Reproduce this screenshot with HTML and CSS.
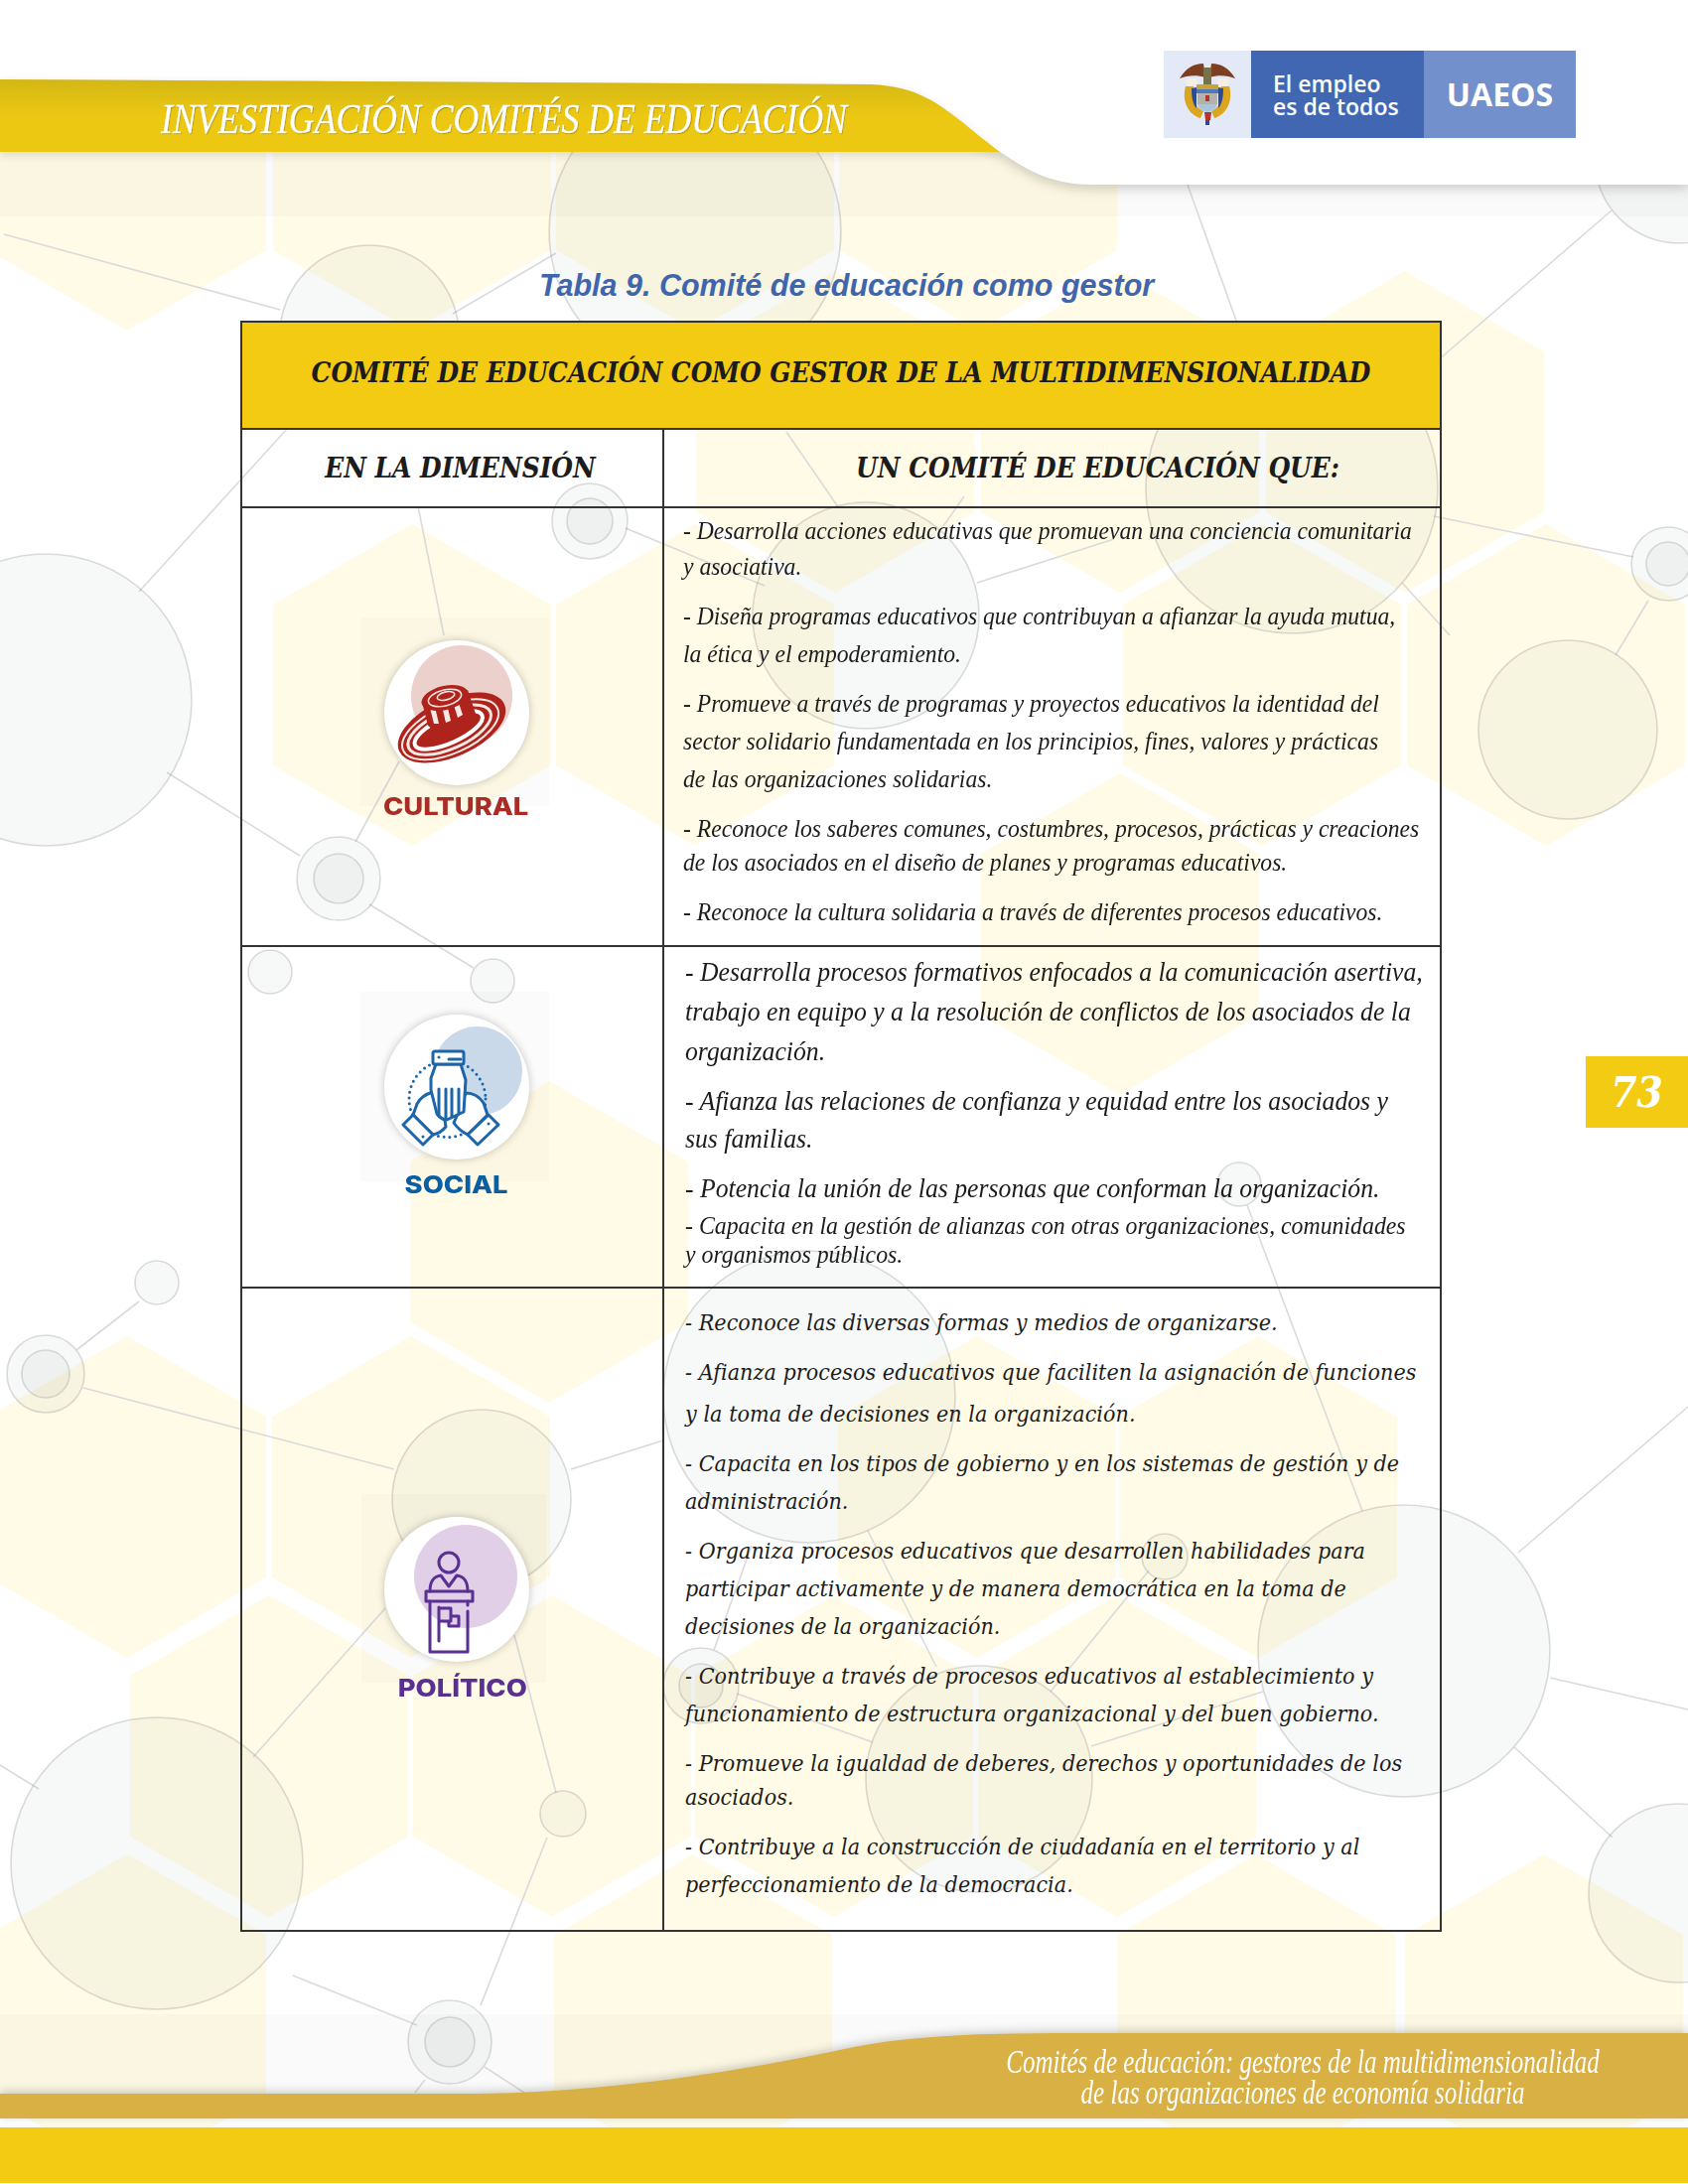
FILE: index.html
```html
<!DOCTYPE html>
<html lang="es">
<head>
    <meta charset="UTF-8">
    <title>Tabla 9. Comité de educación como gestor</title>
    <link rel="stylesheet" href="styles.css">
</head>
<body>
<div class="page">
    <!-- free canvas: honeycomb, network of circles, header and footer shapes -->
    <svg class="canvas" width="1700" height="2200" viewBox="0 0 1700 2200">
        <defs>
            <polygon id="hex" points="0,-162 140,-81 140,81 0,162 -140,81 -140,-81"/>
            <linearGradient id="bannerFill" x1="0" y1="80" x2="0" y2="153" gradientUnits="userSpaceOnUse">
                <stop offset="0" stop-color="#d3b714"/>
                <stop offset=".5" stop-color="#ecc813"/>
                <stop offset="1" stop-color="#ecc813"/>
            </linearGradient>
        </defs>
        <g class="hexes">
            <use href="#hex" x="128" y="171"/><use href="#hex" x="415" y="171"/><use href="#hex" x="700" y="171"/><use href="#hex" x="985" y="171"/>
            <use href="#hex" x="841" y="435"/><use href="#hex" x="1128" y="435"/><use href="#hex" x="1415" y="435"/>
            <use href="#hex" x="415" y="690"/><use href="#hex" x="700" y="690"/><use href="#hex" x="1271" y="690"/><use href="#hex" x="1557" y="690"/>
            <use href="#hex" x="1128" y="941"/>
            <use href="#hex" x="553" y="1251"/>
            <use href="#hex" x="128" y="1508"/><use href="#hex" x="414" y="1508"/><use href="#hex" x="984" y="1508"/><use href="#hex" x="1267" y="1508"/>
            <use href="#hex" x="271" y="1769"/><use href="#hex" x="556" y="1769"/><use href="#hex" x="840" y="1769"/><use href="#hex" x="1125" y="1769"/>
            <use href="#hex" x="128" y="2030"/><use href="#hex" x="698" y="2030"/><use href="#hex" x="1265" y="2030"/><use href="#hex" x="1555" y="2030"/>
        </g>
        <rect class="haze" x="0" y="150" width="1700" height="68"/>
        <rect class="haze" x="0" y="2029" width="1700" height="85"/>
        <g class="links">
            <line x1="4" y1="236" x2="282" y2="312"/><line x1="456" y1="316" x2="560" y2="255"/>
            <line x1="1196" y1="186" x2="1245" y2="323"/><line x1="1440" y1="370" x2="1623" y2="212"/>
            <line x1="1444" y1="520" x2="1645" y2="561"/><line x1="1627" y1="660" x2="1660" y2="605"/>
            <line x1="140" y1="596" x2="300" y2="420"/><line x1="421" y1="510" x2="447" y2="640"/>
            <line x1="792" y1="435" x2="845" y2="512"/><line x1="971" y1="500" x2="950" y2="530"/>
            <line x1="1122" y1="543" x2="984" y2="587"/><line x1="630" y1="532" x2="770" y2="590"/>
            <line x1="1412" y1="587" x2="1460" y2="640"/><line x1="168" y1="778" x2="302" y2="862"/>
            <line x1="372" y1="911" x2="477" y2="975"/><line x1="402" y1="767" x2="358" y2="848"/>
            <line x1="1256" y1="1214" x2="1372" y2="1522"/><line x1="77" y1="1360" x2="140" y2="1311"/>
            <line x1="84" y1="1398" x2="397" y2="1480"/><line x1="575" y1="1480" x2="668" y2="1451"/>
            <line x1="388" y1="1620" x2="255" y2="1770"/><line x1="518" y1="1647" x2="560" y2="1806"/>
            <line x1="551" y1="1851" x2="484" y2="2020"/><line x1="295" y1="1990" x2="420" y2="2040"/>
            <line x1="1529" y1="1564" x2="1700" y2="1417"/><line x1="1561" y1="1690" x2="1700" y2="1722"/>
            <line x1="1525" y1="1760" x2="1624" y2="1851"/><line x1="0" y1="1778" x2="39" y2="1802"/>
            <line x1="488" y1="2082" x2="528" y2="2108"/><line x1="418" y1="2108" x2="428" y2="2095"/>
            <line x1="874" y1="1542" x2="943" y2="1679"/><line x1="757" y1="1557" x2="719" y2="1662"/>
            <line x1="1157" y1="1582" x2="1058" y2="1704"/><line x1="742" y1="1706" x2="879" y2="1755"/>
            <line x1="1099" y1="1759" x2="1272" y2="1704"/>
        </g>
        <g class="nodes">
            <circle cx="700" cy="233" r="147"/><circle cx="372" cy="337" r="90"/><circle cx="1691" cy="160" r="85"/>
            <circle cx="1301" cy="491" r="147"/><circle cx="594" cy="525" r="38"/><circle cx="594" cy="525" r="23"/>
            <circle cx="872" cy="620" r="114"/><circle cx="1680" cy="568" r="37"/><circle cx="1680" cy="568" r="22"/>
            <circle cx="1579" cy="735" r="90"/><circle cx="46" cy="705" r="147"/><circle cx="341" cy="885" r="42"/><circle cx="341" cy="885" r="25"/>
            <circle cx="272" cy="979" r="22"/><circle cx="496" cy="988" r="22"/><circle cx="1248" cy="1193" r="22"/><circle cx="158" cy="1292" r="22"/>
            <circle cx="46" cy="1384" r="39"/><circle cx="46" cy="1384" r="24"/><circle cx="815" cy="1407" r="147"/><circle cx="485" cy="1510" r="90"/>
            <circle cx="1173" cy="1568" r="23"/><circle cx="706" cy="1698" r="38"/><circle cx="706" cy="1698" r="22"/>
            <circle cx="1414" cy="1663" r="147"/><circle cx="986" cy="1792" r="114"/><circle cx="567" cy="1827" r="23"/>
            <circle cx="158" cy="1877" r="147"/><circle cx="1690" cy="1907" r="90"/><circle cx="453" cy="2057" r="42"/><circle cx="453" cy="2057" r="25"/>
        </g>
        <g class="veil">
            <rect x="363" y="622" width="190" height="190"/>
            <rect x="363" y="999" width="190" height="191"/>
            <rect x="364" y="1505" width="186" height="190"/>
        </g>
        <path class="head-white" d="M0,0 H1700 V186 H1100 C1055,186 1030,168 1007,153 L877,85 L0,80 Z"/>
        <path class="head-yellow" fill="url(#bannerFill)" d="M0,80 L877,85 C925,87 945,105 968,122 C980,132 995,144 1007,153 H0 Z"/>
        <path class="foot-gold" d="M0,2109 H480 C600,2108 740,2088 850,2064 C920,2049 1000,2048 1085,2048 H1700 V2134 H0 Z"/>
    </svg>

    <div class="tab-number">73</div>

    <div class="content">
        <header class="top">
            <div class="banner-title">INVESTIGACIÓN COMITÉS DE EDUCACIÓN</div>
            <div class="logo">
                <div class="logo-shield">
                    <svg width="58" height="64" viewBox="0 0 58 64">
                        <path fill="#7d3f22" d="M1,16 C7,6 15,1 25,1 L27,15 C18,12 8,13 1,16 Z"/>
                        <path fill="#7d3f22" d="M57,16 C51,6 43,1 33,1 L31,15 C40,12 50,13 57,16 Z"/>
                        <rect fill="#77714a" x="25" y="5" width="8" height="17"/>
                        <path fill="#f6efe2" d="M6,17 L18,16 L20,25 L10,24 Z M52,17 L40,16 L38,25 L48,24 Z"/>
                        <path fill="#dca51f" d="M7,24 C3,38 9,52 22,56 L25,49 C17,46 13,36 15,24 Z"/>
                        <path fill="#dca51f" d="M51,24 C55,38 49,52 36,56 L33,49 C41,46 45,36 43,24 Z"/>
                        <path fill="#2d4b95" d="M13,26 L18,25 L18,46 C14,42 13,34 13,26 Z M45,26 L40,25 L40,46 C44,42 45,34 45,26 Z"/>
                        <rect fill="#c6a43a" x="18" y="22" width="22" height="5"/>
                        <rect fill="#4f79b8" x="18" y="27" width="22" height="4"/>
                        <rect fill="#b3b3ad" x="19" y="31" width="20" height="11"/>
                        <rect fill="#b4352c" x="27" y="33" width="4" height="6"/>
                        <path fill="#a8c6e0" d="M19,42 H39 C38,47 33,50 29,50 C25,50 20,47 19,42 Z"/>
                        <path fill="#b4352c" d="M26,50 H33 L32,58 H27 Z"/>
                        <rect fill="#2d4b95" x="27" y="58" width="4" height="5"/>
                    </svg>
                </div>
                <div class="logo-motto">El empleo<br>es de todos</div>
                <div class="logo-name">UAEOS</div>
            </div>
        </header>

        <h1 class="table-caption">Tabla 9. Comité de educación como gestor</h1>

        <table class="grid">
            <colgroup><col class="col-dim"><col class="col-text"></colgroup>
            <tr class="row-title">
                <th colspan="2">COMITÉ DE EDUCACIÓN COMO GESTOR DE LA MULTIDIMENSIONALIDAD</th>
            </tr>
            <tr class="row-head">
                <th class="head-dim">EN LA DIMENSIÓN</th>
                <th class="head-text">UN COMITÉ DE EDUCACIÓN QUE:</th>
            </tr>
            <tr class="row-cultural">
                <td class="dim">
                    <div class="dim-inner">
                        <div class="badge">
                            <svg width="146" height="146" viewBox="0 0 146 146">
                                <circle cx="78" cy="56" r="51" fill="#ecd0cb"/>
                                <g transform="rotate(-24 68 88)">
                                    <ellipse cx="68" cy="88" rx="58" ry="29" fill="#ae231b"/>
                                    <ellipse cx="66" cy="89" rx="52" ry="24" fill="none" stroke="#f8e8e4" stroke-width="2"/>
                                    <ellipse cx="65" cy="89" rx="45" ry="19" fill="none" stroke="#f8e8e4" stroke-width="3"/>
                                    <ellipse cx="64" cy="89" rx="37" ry="13" fill="none" stroke="#fff" stroke-width="4"/>
                                </g>
                                <path fill="#ae231b" d="M38,62 L44,86 C54,96 78,92 92,74 L84,50 Z"/>
                                <path fill="#f8e8e4" d="M46,68 l5,-1 l4,17 l-5,0 Z M58,66 l5,-2 l4,17 l-5,2 Z M69,62 l5,-2 l5,15 l-5,3 Z"/>
                                <ellipse cx="61" cy="58" rx="24" ry="12" fill="#ae231b" transform="rotate(-14 61 58)"/>
                                <ellipse cx="61" cy="58" rx="17" ry="8" fill="none" stroke="#f6e3df" stroke-width="1.6" transform="rotate(-14 61 58)"/>
                                <ellipse cx="62" cy="56" rx="9" ry="4" fill="none" stroke="#f6e3df" stroke-width="1.6" transform="rotate(-14 62 56)"/>
                            </svg>
                        </div>
                        <div class="dim-label cultural">CULTURAL</div>
                    </div>
                </td>
                <td class="text text-cultural">
                    <p class="lh-36">- Desarrolla acciones educativas que promuevan una conciencia comunitaria<br>y asociativa.</p>
                    <p>- Diseña programas educativos que contribuyan a afianzar la ayuda mutua,<br>la ética y el empoderamiento.</p>
                    <p>- Promueve a través de programas y proyectos educativos la identidad del<br>sector solidario fundamentada en los principios, fines, valores y prácticas<br>de las organizaciones solidarias.</p>
                    <p class="lh-34">- Reconoce los saberes comunes, costumbres, procesos, prácticas y creaciones<br>de los asociados en el diseño de planes y programas educativos.</p>
                    <p>- Reconoce la cultura solidaria a través de diferentes procesos educativos.</p>
                </td>
            </tr>
            <tr class="row-social">
                <td class="dim">
                    <div class="dim-inner">
                        <div class="badge">
                            <svg width="146" height="146" viewBox="0 0 146 146">
                                <circle cx="94" cy="57" r="45" fill="#c9d9ea"/>
                                <circle cx="63.5" cy="85" r="38.5" fill="none" stroke="#1b66ab" stroke-width="3" stroke-dasharray="0 5.8" stroke-linecap="round"/>
                                <g fill="#fff" stroke="#1b66ab" stroke-width="3" stroke-linejoin="round" stroke-linecap="round">
                                    <path d="M29,101 L33,90 C36,84 42,80 49,78 L60,100 L62,113 C58,118 54,120 49,121 Z"/>
                                    <path d="M104,101 L100,89 C96,83 90,79 82,79 L74,100 L70,109 C74,115 80,119 84,121 Z"/>
                                    <path d="M52,50 L47,64 L47,76 L53,100 C56,104 60,106 63,106 L80,98 L82,66 L77,50 Z"/>
                                    <rect x="49" y="37" width="31" height="13" rx="2"/>
                                    <path d="M19,111 L29,101 L49,121 L39,131 Z"/>
                                    <path d="M115,111 L105,101 L84,121 L94,131 Z"/>
                                    <path fill="none" d="M55,75 V102 M62,75 V104 M68,75 V103 M75,75 V100 M65,45 H77"/>
                                </g>
                                <g fill="#1b66ab"><circle cx="55" cy="43" r="1.5"/><circle cx="39" cy="123" r="1.5"/><circle cx="105" cy="110" r="1.5"/></g>
                            </svg>
                        </div>
                        <div class="dim-label social">SOCIAL</div>
                    </div>
                </td>
                <td class="text text-social">
                    <p class="lh-40">- Desarrolla procesos formativos enfocados a la comunicación asertiva,<br>trabajo en equipo y a la resolución de conflictos de los asociados de la<br>organización.</p>
                    <p>- Afianza las relaciones de confianza y equidad entre los asociados y<br>sus familias.</p>
                    <p>- Potencia la unión de las personas que conforman la organización.</p>
                    <p class="small">- Capacita en la gestión de alianzas con otras organizaciones, comunidades<br>y organismos públicos.</p>
                </td>
            </tr>
            <tr class="row-politico">
                <td class="dim">
                    <div class="dim-inner">
                        <div class="badge">
                            <svg width="146" height="146" viewBox="0 0 146 146">
                                <circle cx="82" cy="60" r="52" fill="#e0cfe6"/>
                                <g fill="none" stroke="#5a2f92" stroke-width="3" stroke-linejoin="round" stroke-linecap="round">
                                    <circle cx="65" cy="46" r="10"/>
                                    <path d="M46,75 C46,64 50,60 57,59 L65,70 L73,59 C80,60 84,64 84,75"/>
                                    <rect x="42" y="75" width="47" height="10"/>
                                    <path d="M46,85 V136 H84 V95 M84,85 V89"/>
                                    <path d="M55,91 V125 M55,92 H67 V105 H55 M67,100 H75 V110 H65 V105"/>
                                </g>
                            </svg>
                        </div>
                        <div class="dim-label politico">POLÍTICO</div>
                    </div>
                </td>
                <td class="text text-politico">
                    <p>- Reconoce las diversas formas y medios de organizarse.</p>
                    <p class="lh-42">- Afianza procesos educativos que faciliten la asignación de funciones<br>y la toma de decisiones en la organización.</p>
                    <p>- Capacita en los tipos de gobierno y en los sistemas de gestión y de<br>administración.</p>
                    <p>- Organiza procesos educativos que desarrollen habilidades para<br>participar activamente y de manera democrática en la toma de<br>decisiones de la organización.</p>
                    <p>- Contribuye a través de procesos educativos al establecimiento y<br>funcionamiento de estructura organizacional y del buen gobierno.</p>
                    <p class="lh-34">- Promueve la igualdad de deberes, derechos y oportunidades de los<br>asociados.</p>
                    <p>- Contribuye a la construcción de ciudadanía en el territorio y al<br>perfeccionamiento de la democracia.</p>
                </td>
            </tr>
        </table>

        <footer class="foot-title">Comités de educación: gestores de la multidimensionalidad<br>de las organizaciones de economía solidaria</footer>
        <div class="foot-bar"></div>
    </div>
</div>
</body>
</html>
```

FILE: styles.css
```css
* {
    box-sizing: border-box;
}

html, body {
    margin: 0;
    padding: 0;
    background: white;
}

.page {
    position: relative;
    width: 1700px;
    height: 2200px;
    overflow: hidden;
}

/* background canvas */
.canvas {
    position: absolute;
    left: 0;
    top: 0;
}

.hexes use {
    fill: #fffbe6;
}

.haze {
    fill: #000;
    opacity: .02;
}

.veil rect {
    fill: #000;
    opacity: .015;
}

.links line {
    stroke: #dadada;
    stroke-width: 1.6;
}

.nodes circle {
    fill: #6e7d7d;
    fill-opacity: .055;
    stroke: #9a9a9a;
    stroke-opacity: .35;
    stroke-width: 1.6;
}

.head-white {
    fill: white;
    filter: drop-shadow(0 4px 6px rgba(0, 0, 0, .18));
}

.head-yellow {
    filter: drop-shadow(0 3px 5px rgba(0, 0, 0, .12));
}

.foot-gold {
    fill: #d8b044;
    filter: drop-shadow(0 -2px 5px rgba(0, 0, 0, .2));
}

.tab-number {
    position: absolute;
    right: 0;
    top: 1064px;
    width: 103px;
    height: 72px;
    display: flex;
    align-items: center;
    justify-content: center;
    background-color: #f3cb13;
    color: white;
    font: italic bold 42px "DejaVu Serif Condensed", "DejaVu Serif", serif;
}

/* page flow */
.content {
    position: relative;
    display: flex;
    flex-direction: column;
    height: 2200px;
}

.top {
    display: flex;
    justify-content: space-between;
    align-items: flex-start;
    height: 255px;
    padding: 51px 113px 0 162px;
}

.banner-title {
    margin-top: 47px;
    font: italic 43px "Liberation Serif", serif;
    line-height: 44px;
    color: white;
    white-space: nowrap;
    -webkit-text-stroke: .3px white;
    text-shadow: 1px 1px 1px rgba(90, 70, 0, .45);
    transform: scaleX(.83);
    transform-origin: left center;
}

.logo {
    display: flex;
    height: 88px;
    color: white;
    font-family: "Open Sans", sans-serif;
}

.logo-shield {
    display: flex;
    align-items: center;
    justify-content: center;
    width: 88px;
    background-color: #e3e9f6;
}

.logo-motto {
    width: 174px;
    padding: 22px 0 0 22px;
    background-color: #4267b2;
    font-size: 23px;
    font-weight: 600;
    line-height: 23px;
}

.logo-name {
    display: flex;
    align-items: center;
    justify-content: center;
    width: 153px;
    padding-bottom: 2px;
    background-color: #7291cc;
    font-size: 32px;
    font-weight: 700;
}

.table-caption {
    margin: 8px 0 0;
    height: 60px;
    padding-left: 543px;
    font: italic bold 30.5px "Liberation Sans", sans-serif;
    line-height: 48px;
    color: #3f65ad;
}

.grid {
    width: 1210px;
    margin-left: 242px;
    border-collapse: collapse;
    table-layout: fixed;
    color: #1c1c1c;
}

.col-dim {
    width: 425px;
}

.grid th, .grid td {
    border: 2px solid #333;
    padding: 0;
}

.grid th {
    font-family: "DejaVu Serif Condensed", "DejaVu Serif", serif;
    font-style: italic;
    font-weight: bold;
    font-size: 27.7px;
}

.row-title {
    height: 108px;
}

.row-title th {
    padding-bottom: 6px;
    background-color: #f3cb13;
}

.row-head {
    height: 79px;
}

.grid .head-dim {
    padding-left: 16px;
}

.grid .head-text {
    padding-left: 92px;
}

.row-cultural {
    height: 442px;
}

.row-social {
    height: 344px;
}

.row-politico {
    height: 648px;
}

/* dimension column */
.dim {
    vertical-align: top;
}

.dim-inner {
    display: flex;
    flex-direction: column;
    align-items: center;
}

.row-cultural .dim-inner {
    padding: 133px 0 0 8px;
}

.row-social .dim-inner {
    padding: 68px 0 0 8px;
}

.row-politico .dim-inner {
    padding: 230px 0 0 9px;
}

.badge {
    width: 146px;
    height: 146px;
    border-radius: 50%;
    background-color: white;
    box-shadow: 0 0 8px rgba(0, 0, 0, .22);
}

.badge svg {
    display: block;
}

.dim-label {
    margin-top: 8px;
    font: 800 24px "Inter", sans-serif;
    line-height: 32px;
    transform: scaleX(1.14);
}

.cultural {
    margin-top: 6px;
    color: #a92c25;
}

.social {
    margin-top: 10px;
    color: #0a5ea3;
}

.politico {
    margin-top: 11px;
    color: #5a2f92;
    padding-left: 10px;
}

/* text column */
.text {
    vertical-align: top;
    white-space: nowrap;
    font-style: italic;
}

.text p {
    margin: 12px 0 0;
    line-height: 38px;
    transform-origin: left center;
}

.text p.lh-34 {
    line-height: 34px;
    padding: 2px 0;
}

.text p.lh-36 {
    line-height: 36px;
    padding: 1px 0;
}

.text p.lh-40 {
    line-height: 40px;
    margin: 11px 0 -1px;
}

.text p.lh-42 {
    line-height: 42px;
    margin: 10px 0 -2px;
}

.grid .text-cultural {
    padding-left: 19px;
    font-family: "Liberation Serif", serif;
    font-size: 26px;
}

.text-cultural p {
    transform: scaleX(.908);
}

.text-cultural p:first-child {
    margin-top: 4px;
}

.grid .text-social {
    padding-left: 21px;
    font-family: "Liberation Serif", serif;
    font-size: 27px;
}

.text-social p {
    transform: scaleX(.952);
}

.text-social p:first-child {
    margin-top: 5px;
}

.text-social p.small {
    margin-top: 4px;
    font-size: 25px;
    line-height: 29px;
}

.grid .text-politico {
    padding-left: 21px;
    font-family: "DejaVu Serif Condensed", "DejaVu Serif", serif;
    font-size: 23px;
    letter-spacing: .07px;
}

.text-politico p:first-child {
    margin-top: 15px;
}

.foot-title {
    margin: 115px 0 0 902px;
    width: 820px;
    text-align: center;
    font: italic 34px "Liberation Serif", serif;
    line-height: 31px;
    color: white;
    white-space: nowrap;
    transform: scaleX(.735);
}

.foot-bar {
    margin-top: auto;
    height: 56px;
    margin-bottom: 1px;
    background-color: #f3cb13;
}
```
